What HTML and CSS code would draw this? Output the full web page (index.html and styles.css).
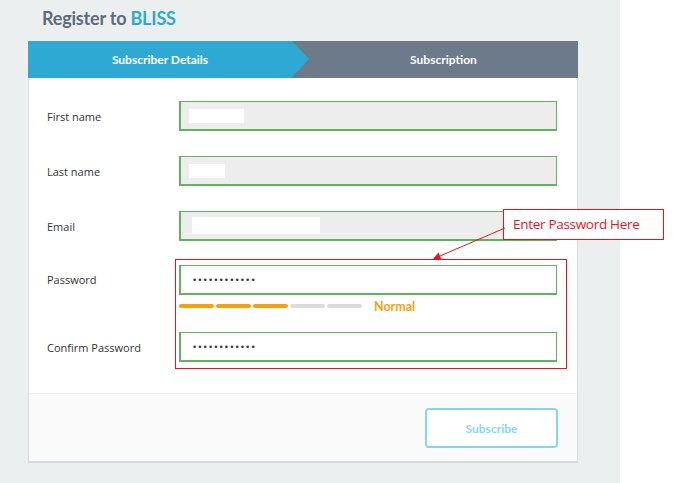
FILE: index.html
```html
<!DOCTYPE html>
<html lang="en">
<head>
<meta charset="utf-8">
<title>Register to BLISS</title>
<link rel="stylesheet" href="styles.css">
</head>
<body>
<div class="page">
  <h1 class="title">Register to <span class="brand">BLISS</span></h1>
  <div class="card">
    <div class="steps">
      <div class="step step-active">Subscriber Details</div>
      <div class="step step-next">Subscription</div>
    </div>
    <div class="form">
      <div class="row">
        <label class="label">First name</label>
        <div class="field field-filled"><span class="redact redact-first"></span></div>
      </div>
      <div class="row">
        <label class="label">Last name</label>
        <div class="field field-filled"><span class="redact redact-last"></span></div>
      </div>
      <div class="row row-email">
        <label class="label">Email</label>
        <div class="field field-filled"><span class="redact redact-email"></span></div>
      </div>
      <div class="row row-password">
        <label class="label">Password</label>
        <div class="field-group">
          <div class="field"><span class="dots">••••••••••••</span></div>
          <div class="strength">
            <span class="bar bar-on"></span>
            <span class="bar bar-on"></span>
            <span class="bar bar-on"></span>
            <span class="bar"></span>
            <span class="bar"></span>
            <span class="strength-text">Normal</span>
          </div>
        </div>
      </div>
      <div class="row row-confirm">
        <label class="label">Confirm Password</label>
        <div class="field"><span class="dots">••••••••••••</span></div>
      </div>
    </div>
    <div class="footer">
      <button class="btn">Subscribe</button>
    </div>
  </div>

  <div class="highlight"></div>
  <div class="callout">Enter Password Here</div>
  <svg class="arrow" width="673" height="483" viewBox="0 0 673 483">
    <line x1="505" y1="228" x2="440" y2="256" stroke="#e8141b" stroke-width="1"/>
    <polygon points="433,259 438.5,252.5 441.5,259.5" fill="#e8141b"/>
  </svg>
</div>
</body>
</html>
```

FILE: styles.css
```css
* { box-sizing: border-box; }
html, body { margin: 0; padding: 0; background: #ffffff; }
body { width: 673px; height: 483px; overflow: hidden; font-family: Lato, "Open Sans", sans-serif; }

.page {
  position: relative;
  width: 620px;
  height: 483px;
  background: #eceff0;
  padding: 0 0 0 28px;
}

.title {
  margin: 0;
  padding: 7px 0 0 14px;
  height: 41px;
  font-size: 18px;
  font-weight: 700;
  color: #5f6b79;
  letter-spacing: -0.2px;
}
.brand { color: #2ea9d3; }

.card {
  width: 550px;
  background: #ffffff;
  border: 1px solid #d9dcde;
  border-top: 0;
  border-bottom: 2px solid #d6d9db;
}

.steps {
  display: flex;
  height: 37px;
  background: #6d7a89;
  margin-left: -1px;
  margin-right: -1px;
}
.step {
  display: flex;
  align-items: center;
  justify-content: center;
  color: #ffffff;
  font-size: 12px;
  font-weight: 700;
}
.step-active {
  position: relative;
  width: 264px;
  background: #2ea9d3;
}
.step-active::after {
  content: "";
  position: absolute;
  right: -17px;
  top: 0;
  border-top: 18.5px solid transparent;
  border-bottom: 18.5px solid transparent;
  border-left: 17px solid #2ea9d3;
}
.step-next {
  flex: 1;
  padding-left: 17px;
}

.form {
  padding: 23px 19px 31px 18px;
}
.row {
  display: flex;
  align-items: center;
  margin-bottom: 25px;
}
.row-email { margin-bottom: 24px; }
.row-password {
  align-items: flex-start;
  margin-bottom: 20px;
}
.row-password .label { line-height: 30px; }
.row-confirm { margin-bottom: 0; }

.label {
  width: 132px;
  font-family: "Open Sans", Lato, sans-serif;
  font-size: 11px;
  color: #333333;
}

.field {
  position: relative;
  width: 378px;
  height: 30px;
  border: 2px solid #5fb35a;
  border-top-width: 1px;
  border-right-width: 1px;
  border-bottom-width: 2px;
  background: #ffffff;
  display: flex;
  align-items: center;
  padding-left: 11px;
}
.field-filled { background: #ededed; }
.field-group { width: 378px; }

.redact { display: block; background: #ffffff; height: 14px; }
.redact-first { width: 55px; margin-left: -3px; }
.redact-last { width: 36px; margin-left: -3px; }
.redact-email { width: 128px; height: 17px; }

.dots {
  font-family: "DejaVu Sans", sans-serif;
  font-size: 9px;
  letter-spacing: 0;
  color: #3a3a3a;
}

.strength {
  display: flex;
  align-items: center;
  height: 12px;
  margin-top: 5px;
}
.bar {
  width: 35px;
  height: 4px;
  border-radius: 2px;
  background: #dcdcdc;
  margin-right: 2px;
}
.bar-on { background: #f7a00e; }
.strength-text {
  margin-left: 10px;
  color: #f7a00e;
  font-size: 12.5px;
  font-weight: 700;
}

.footer {
  display: flex;
  justify-content: flex-end;
  padding: 14px 19px 13px 0;
  background: #fafafa;
  border-top: 1px solid #efefef;
}
.btn {
  width: 133px;
  height: 40px;
  border: 2px solid #86d6f2;
  border-radius: 4px;
  background: #ffffff;
  color: #86d6f2;
  font-family: Lato, sans-serif;
  font-size: 12px;
  font-weight: 700;
}

.highlight {
  position: absolute;
  left: 175px;
  top: 259px;
  width: 392px;
  height: 110px;
  border: 1px solid #e8141b;
}
.callout {
  position: absolute;
  left: 503px;
  top: 209px;
  width: 161px;
  height: 31px;
  border: 1px solid #e8141b;
  background: #ffffff;
  color: #e8141b;
  font-family: "Open Sans", sans-serif;
  font-size: 13.5px;
  letter-spacing: -0.3px;
  padding: 5px 0 0 9px;
}
.arrow {
  position: absolute;
  left: 0;
  top: 0;
  pointer-events: none;
}
```
